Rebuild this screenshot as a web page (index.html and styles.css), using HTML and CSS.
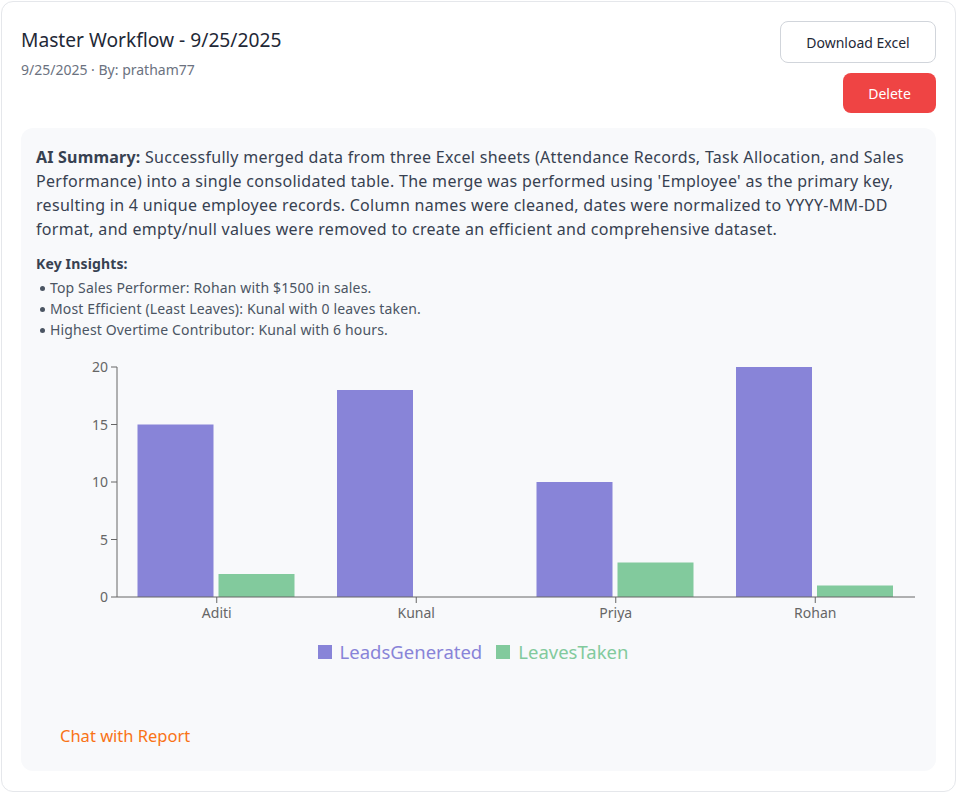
FILE: index.html
```html
<!DOCTYPE html>
<html>
<head>
<meta charset="utf-8">
<link rel="stylesheet" href="styles.css">
</head>
<body>
<div class="card">
  <div class="header">
    <div class="titles">
      <h1 class="title">Master Workflow - 9/25/2025</h1>
      <div class="meta">9/25/2025 · By: pratham77</div>
    </div>
    <div class="actions">
      <button class="btn btn-outline">Download Excel</button>
      <button class="btn btn-danger">Delete</button>
    </div>
  </div>
  <div class="summary">
    <p class="summary-text"><strong>AI Summary:</strong> Successfully merged data from three Excel sheets (Attendance Records, Task Allocation, and Sales Performance) into a single consolidated table. The merge was performed using 'Employee' as the primary key, resulting in 4 unique employee records. Column names were cleaned, dates were normalized to YYYY-MM-DD format, and empty/null values were removed to create an efficient and comprehensive dataset.</p>
    <div class="insights-title">Key Insights:</div>
    <ul class="insights">
      <li>Top Sales Performer: Rohan with $1500 in sales.</li>
      <li>Most Efficient (Least Leaves): Kunal with 0 leaves taken.</li>
      <li>Highest Overtime Contributor: Kunal with 6 hours.</li>
    </ul>
    <div class="chart">
      <svg class="chart-svg" width="884" height="270" viewBox="0 0 884 270">
        <g class="bars">
          <rect x="100.5" y="67.5" width="76" height="172.5" fill="#8884d8"/>
          <rect x="181.5" y="217" width="76" height="23" fill="#82ca9d"/>
          <rect x="300" y="33" width="76" height="207" fill="#8884d8"/>
          <rect x="499.5" y="125" width="76" height="115" fill="#8884d8"/>
          <rect x="580.5" y="205.5" width="76" height="34.5" fill="#82ca9d"/>
          <rect x="699" y="10" width="76" height="230" fill="#8884d8"/>
          <rect x="780" y="228.5" width="76" height="11.5" fill="#82ca9d"/>
        </g>
        <g class="axis" stroke="#666" fill="none">
          <line x1="80" y1="10" x2="80" y2="240"/>
          <line x1="74" y1="10" x2="80" y2="10"/>
          <line x1="74" y1="67.5" x2="80" y2="67.5"/>
          <line x1="74" y1="125" x2="80" y2="125"/>
          <line x1="74" y1="182.5" x2="80" y2="182.5"/>
          <line x1="74" y1="240" x2="80" y2="240"/>
          <line x1="80" y1="240" x2="878" y2="240"/>
          <line x1="179.75" y1="240" x2="179.75" y2="246"/>
          <line x1="379.25" y1="240" x2="379.25" y2="246"/>
          <line x1="578.75" y1="240" x2="578.75" y2="246"/>
          <line x1="778.25" y1="240" x2="778.25" y2="246"/>
        </g>
        <g class="ticks" fill="#666">
          <text x="71" y="15" text-anchor="end">20</text>
          <text x="71" y="72.5" text-anchor="end">15</text>
          <text x="71" y="130" text-anchor="end">10</text>
          <text x="71" y="187.5" text-anchor="end">5</text>
          <text x="71" y="245" text-anchor="end">0</text>
          <text x="179.75" y="261" text-anchor="middle">Aditi</text>
          <text x="379.25" y="261" text-anchor="middle">Kunal</text>
          <text x="578.75" y="261" text-anchor="middle">Priya</text>
          <text x="778.25" y="261" text-anchor="middle">Rohan</text>
        </g>
      </svg>
      <div class="legend">
        <span class="legend-item leads"><span class="swatch"></span>LeadsGenerated</span>
        <span class="legend-item leaves"><span class="swatch"></span>LeavesTaken</span>
      </div>
    </div>
    <button class="chat-btn">Chat with Report</button>
  </div>
</div>
</body>
</html>
```
FILE: styles.css
```css
* { box-sizing: border-box; }
html, body { margin: 0; padding: 0; background: #fff; }
body {
  font-family: "Noto Sans", "Open Sans", sans-serif;
  color: #1f2937;
}
.card {
  margin: 1px 1px 0 1px;
  height: 791px;
  border: 1px solid #e5e7eb;
  border-radius: 12px;
  padding: 19px 19px 20px 19px;
  display: flex;
  flex-direction: column;
}
.header {
  display: flex;
  justify-content: space-between;
  align-items: flex-start;
}
.title {
  margin: 5px 0 0 0;
  font-size: 19.2px;
  font-weight: 400;
  line-height: 28px;
  color: #1f2937;
}
.meta {
  margin-top: 6px;
  font-size: 14px;
  line-height: 20px;
  color: #6b7280;
}
.actions {
  display: flex;
  flex-direction: column;
  align-items: flex-end;
  gap: 10px;
}
.btn {
  font-family: inherit;
  font-size: 14px;
  border-radius: 8px;
  cursor: pointer;
}
.btn-outline {
  height: 42px;
  width: 156px;
  background: #fff;
  border: 1px solid #d1d5db;
  color: #1f2937;
}
.btn-danger {
  height: 40px;
  width: 93px;
  background: #ef4444;
  border: none;
  color: #fff;
}
.summary {
  margin-top: 15px;
  flex: 1;
  background: #f8f9fb;
  border-radius: 12px;
  padding: 17px 16px 10px 15px;
  display: flex;
  flex-direction: column;
  align-items: flex-start;
}
.summary-text {
  margin: 0;
  font-size: 16px;
  line-height: 24px;
  letter-spacing: 0.3px;
  color: #374151;
}
.summary-text strong { color: #374151; letter-spacing: 0.2px; }
.insights-title {
  margin-top: 13px;
  font-size: 14px;
  font-weight: 700;
  line-height: 20px;
  letter-spacing: 0.15px;
  color: #374151;
}
.insights {
  margin: 3px 0 0 0;
  padding: 0;
  list-style: none;
  font-size: 14px;
  line-height: 21px;
  letter-spacing: 0.15px;
  color: #4b5563;
}
.insights li {
  position: relative;
  padding-left: 14px;
}
.insights li::before {
  content: "";
  position: absolute;
  left: 4px;
  top: 9px;
  width: 5px;
  height: 5px;
  border-radius: 50%;
  background: #4b5563;
}
.chart {
  margin-top: 17px;
  margin-left: 1px;
  width: 884px;
}
.chart-svg { display: block; }
.chart-svg text {
  font-family: "Noto Sans", "Open Sans", sans-serif;
  font-size: 14px;
}
.legend {
  margin-top: 13px;
  padding-right: 12px;
  display: flex;
  justify-content: center;
  gap: 14px;
  font-size: 18.5px;
  line-height: 24px;
}
.legend-item {
  display: inline-flex;
  align-items: center;
  gap: 8px;
}
.swatch {
  width: 14px;
  height: 14px;
  display: inline-block;
}
.leads { color: #8884d8; }
.leads .swatch { background: #8884d8; }
.leaves { color: #82ca9d; }
.leaves .swatch { background: #82ca9d; }
.chat-btn {
  margin-top: 52px;
  margin-left: 8px;
  background: transparent;
  border: none;
  padding: 8px 16px;
  font-family: inherit;
  font-size: 16.5px;
  color: #f97316;
  cursor: pointer;
}
```
